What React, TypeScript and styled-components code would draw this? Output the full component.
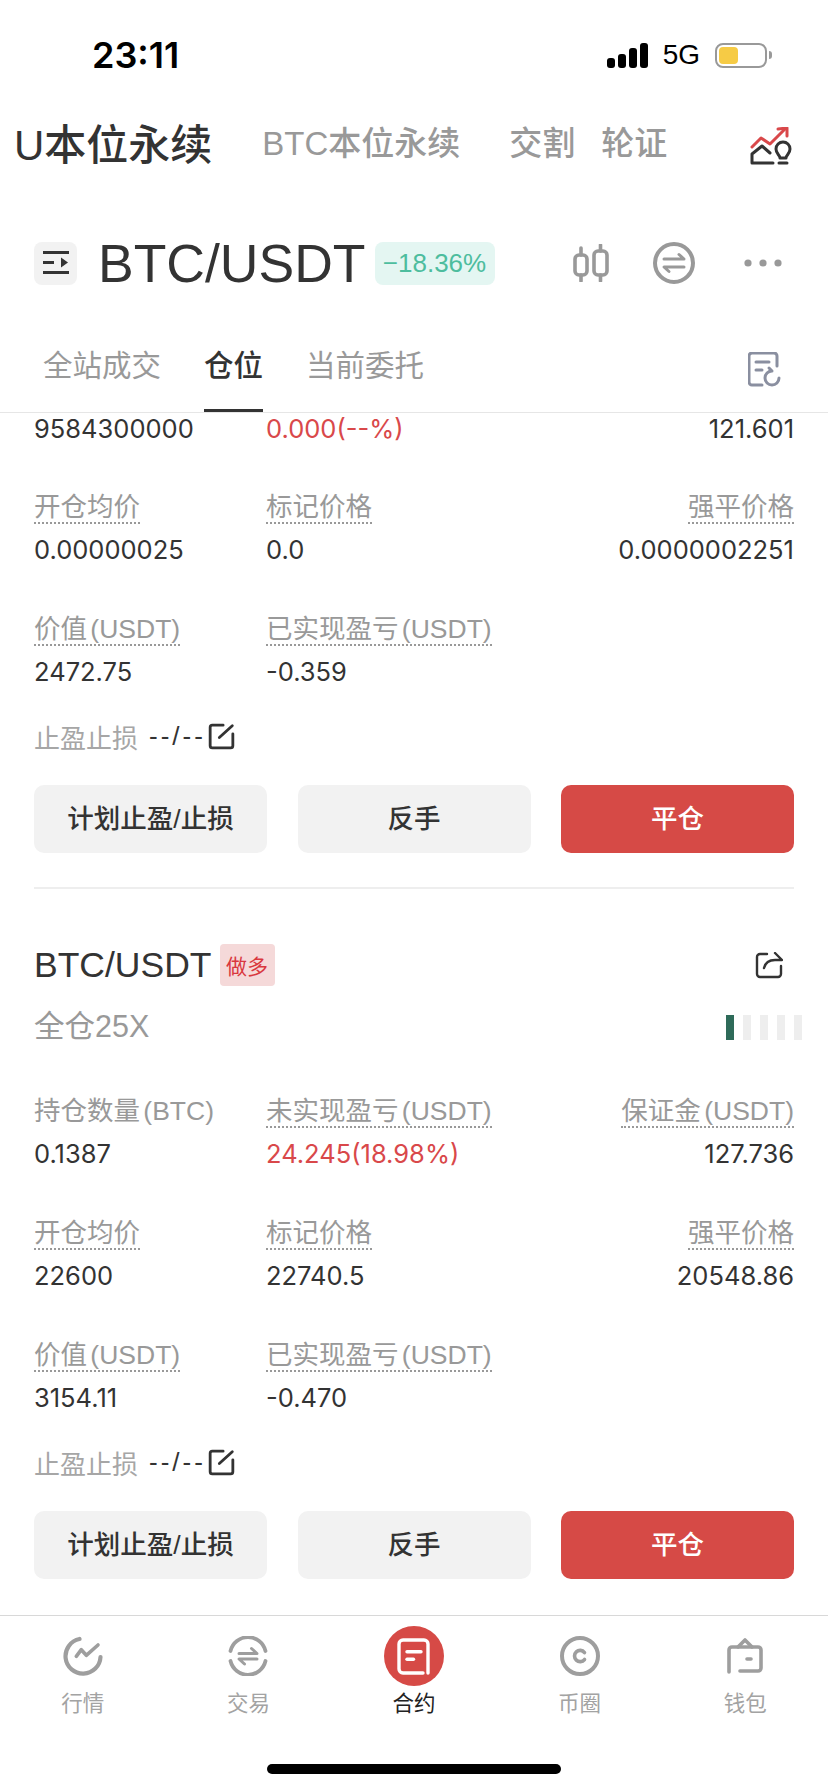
import styled, { createGlobalStyle } from 'styled-components'

const GlobalStyle = createGlobalStyle`
  html, body {
    margin: 0;
    padding: 0;
    background: #fff;
    font-family: 'Liberation Sans', 'Noto Sans CJK SC', sans-serif;
  }
`

const Page = styled.div`
  width: 828px;
  height: 1792px;
  display: flex;
  flex-direction: column;
  overflow: hidden;
  background: #fff;
  color: #333;
`

const StatusBar = styled.div`
  height: 110px;
  flex: none;
  display: flex;
  align-items: center;
  justify-content: space-between;
  padding: 0 56px 0 92px;
`

const Time = styled.span`
  font-family: Inter, sans-serif;
  font-size: 36px;
  font-weight: 600;
  color: #000;
`

const StatusRight = styled.div`
  display: flex;
  align-items: center;
`

const Signal = styled.div`
  display: flex;
  align-items: flex-end;
  gap: 3px;
  height: 25px;
  margin-right: 15px;
`

const SignalBar = styled.span<{ $h: number }>`
  width: 8px;
  height: ${(p) => p.$h}px;
  border-radius: 3px;
  background: #000;
`

const Network = styled.span`
  font-size: 28px;
  color: #000;
  margin-right: 15px;
`

const Battery = styled.div`
  width: 52px;
  height: 25px;
  box-sizing: border-box;
  border: 2.5px solid #999;
  border-radius: 8px;
  padding: 2px;
  display: flex;
`

const BatteryFill = styled.div`
  width: 19px;
  border-radius: 4px;
  background: #f6cb45;
`

const BatteryNub = styled.div`
  width: 3px;
  height: 8px;
  margin-left: 2px;
  border-radius: 0 3px 3px 0;
  background: #999;
`

const TopTabs = styled.div`
  height: 62px;
  flex: none;
  display: flex;
  align-items: center;
  padding: 0 36px 0 14px;
`

const TopTab = styled.span<{ $active?: boolean; $gap: number }>`
  font-size: ${(p) => (p.$active ? 42 : 33)}px;
  font-weight: 500;
  color: ${(p) => (p.$active ? '#333' : '#999')};
  margin-right: ${(p) => p.$gap}px;
  white-space: nowrap;
`

const InsightIcon = styled.div`
  display: flex;
  margin-top: 10px;
`

const Spacer = styled.div`
  flex: 1;
`

const PairRow = styled.div`
  height: 70px;
  flex: none;
  margin-top: 56px;
  display: flex;
  align-items: center;
  padding: 0 46px 0 34px;
`

const MenuButton = styled.div`
  width: 43px;
  height: 43px;
  border-radius: 8px;
  background: #f2f2f2;
  display: flex;
  align-items: center;
  justify-content: center;
  margin-right: 21px;
`

const PairName = styled.span`
  font-size: 53.5px;
  color: #333;
  margin-right: 9px;
`

const ChangeBadge = styled.span`
  width: 120px;
  height: 43px;
  border-radius: 8px;
  background: #e4f6f2;
  color: #4dbd9e;
  font-size: 26px;
  display: flex;
  align-items: center;
  justify-content: center;
`

const PairIcons = styled.div`
  display: flex;
  align-items: center;
  gap: 44px;
`

const MoreIcon = styled.div`
  display: flex;
  margin-left: 5px;
`

const SubTabs = styled.div`
  height: 115px;
  flex: none;
  display: flex;
  align-items: flex-end;
  padding: 0 47px 0 43px;
  border-bottom: 1px solid #e6e6e6;
  box-sizing: border-box;
`

const SubTab = styled.div<{ $active?: boolean }>`
  font-size: 29.5px;
  font-weight: ${(p) => (p.$active ? 500 : 400)};
  color: ${(p) => (p.$active ? '#333' : '#999')};
  height: 65px;
  line-height: 38px;
  box-sizing: border-box;
  margin-right: 43px;
  border-bottom: 3px solid ${(p) => (p.$active ? '#333' : 'transparent')};
`

const DocIcon = styled.div`
  align-self: flex-start;
  margin-top: 54px;
`

const Scroller = styled.div`
  flex: 1;
  min-height: 0;
  overflow: hidden;
`

const ScrollInner = styled.div`
  margin-top: -3px;
  padding: 0 34px;
  display: flex;
  flex-direction: column;
`

const Metrics = styled.div`
  display: grid;
  grid-template-columns: 232px 1fr auto;
  row-gap: 41px;
`

const Metric = styled.div<{ $right?: boolean }>`
  display: flex;
  flex-direction: column;
  align-items: ${(p) => (p.$right ? 'flex-end' : 'flex-start')};
  gap: 7px;
`

const MetricLabel = styled.span<{ $dotted?: boolean }>`
  font-size: 26.5px;
  line-height: 38px;
  height: 36px;
  color: #999;
  word-spacing: -4px;
  box-sizing: border-box;
  border-bottom: ${(p) => (p.$dotted ? '2px dotted #999' : 'none')};
  white-space: nowrap;
`

const MetricValue = styled.span<{ $red?: boolean }>`
  font-family: Inter, sans-serif;
  font-size: 25.5px;
  line-height: 38px;
  color: ${(p) => (p.$red ? '#d9484a' : '#333')};
  white-space: nowrap;
`

const StopRow = styled.div`
  margin-top: 27px;
  height: 36px;
  display: flex;
  align-items: center;
`

const StopLabel = styled.span`
  font-size: 26px;
  color: #a6a6a6;
  margin-right: 11px;
`

const StopValue = styled.span`
  font-size: 26px;
  letter-spacing: 3px;
  color: #333;
  margin-right: 2px;
`

const Actions = styled.div`
  margin-top: 31px;
  display: grid;
  grid-template-columns: repeat(3, 233px);
  justify-content: space-between;
`

const ActionButton = styled.div<{ $primary?: boolean }>`
  height: 68px;
  border-radius: 10px;
  display: flex;
  align-items: center;
  justify-content: center;
  font-size: 26.5px;
  line-height: 36px;
  padding-bottom: 1px;
  box-sizing: border-box;
  font-weight: 500;
  background: ${(p) => (p.$primary ? '#d64a46' : '#f2f2f2')};
  color: ${(p) => (p.$primary ? '#fff' : '#333')};
`

const Divider = styled.div`
  height: 2px;
  margin-top: 34px;
  background: #eee;
`

const CardHead = styled.div`
  margin-top: 55px;
  height: 42px;
  display: flex;
  align-items: center;
  justify-content: space-between;
`

const CardTitle = styled.div`
  display: flex;
  align-items: center;
  gap: 8px;
`

const CardPair = styled.span`
  font-size: 35.5px;
  line-height: 46px;
  color: #333;
`

const SideBadge = styled.span`
  width: 55px;
  height: 42px;
  border-radius: 4px;
  background: #f5d9d9;
  color: #d9383f;
  font-size: 21px;
  display: flex;
  align-items: center;
  justify-content: center;
`

const ShareIcon = styled.div`
  display: flex;
  margin-right: 11px;
`

const CardSub = styled.div`
  margin-top: 23px;
  margin-bottom: 47px;
  height: 36px;
  display: flex;
  align-items: center;
  justify-content: space-between;
`

const Leverage = styled.span`
  font-size: 30.5px;
  line-height: 36px;
  padding-bottom: 2px;
  color: #999;
`

const RiskBars = styled.div`
  display: flex;
  gap: 9px;
  margin-right: -8px;
`

const RiskBar = styled.span<{ $on?: boolean }>`
  width: 8px;
  height: 25px;
  background: ${(p) => (p.$on ? '#2e6b59' : '#eee')};
`

const BottomNav = styled.div`
  flex: none;
  height: 177px;
  box-sizing: border-box;
  border-top: 1px solid #d8d8d8;
  padding-top: 10px;
  display: flex;
  flex-direction: column;
  align-items: center;
`

const NavItems = styled.div`
  width: 100%;
  display: grid;
  grid-template-columns: repeat(5, 1fr);
`

const NavItem = styled.div`
  display: flex;
  flex-direction: column;
  align-items: center;
  gap: 3px;
`

const NavIconSlot = styled.div`
  height: 60px;
  display: flex;
  align-items: center;
  justify-content: center;
`

const NavLabel = styled.span<{ $active?: boolean }>`
  font-size: 21.5px;
  line-height: 30px;
  color: ${(p) => (p.$active ? '#222' : '#a3a3a3')};
`

const HomeIndicator = styled.div`
  width: 294px;
  height: 10px;
  margin-top: 45px;
  border-radius: 5px;
  background: #000;
`

const GRAY = '#9e9e9e'

function TrendIcon() {
  return (
    <svg width="40" height="40" viewBox="0 0 40 40" fill="none" stroke={GRAY} strokeWidth="4.2" strokeLinecap="round" strokeLinejoin="round">
      <path d="M16.5 3 A17.5 17.5 0 1 0 37.5 21" />
      <path d="M13.3 20.3 L18.3 13.7 L23.3 19.3 L35 9" strokeWidth="3.6" />
    </svg>
  )
}

function TradeIcon() {
  return (
    <svg width="40" height="40" viewBox="0 0 40 40" fill="none" stroke={GRAY} strokeWidth="3.8" strokeLinecap="round" strokeLinejoin="round">
      <path d="M2.5 15 A18 18 0 0 1 37.5 15" />
      <path d="M2.5 25 A18 18 0 0 0 37.5 25" />
      <path d="M11 17.5 H29 L23.5 12.5" strokeWidth="3" />
      <path d="M29 23 H11 L16.5 28" strokeWidth="3" />
    </svg>
  )
}

function ContractIcon() {
  return (
    <svg width="60" height="60" viewBox="0 0 60 60" fill="none">
      <circle cx="30" cy="30" r="30" fill="#d64a46" />
      <g stroke="#fff" strokeWidth="3.4" strokeLinecap="round" strokeLinejoin="round">
        <path d="M39 47 H19 a4 4 0 0 1 -4 -4 V18 a4 4 0 0 1 4 -4 H40 a4 4 0 0 1 4 4 V47" />
        <path d="M23 25.7 H37" />
        <path d="M23 33.3 H29.5" />
      </g>
    </svg>
  )
}

function CoinIcon() {
  return (
    <svg width="40" height="40" viewBox="0 0 40 40" fill="none" stroke={GRAY} strokeWidth="4" strokeLinecap="round">
      <circle cx="20" cy="20" r="18" />
      <path d="M24.5 16.5 A5.6 5.6 0 1 0 24.5 23.5" strokeWidth="3.6" />
    </svg>
  )
}

function WalletIcon() {
  return (
    <svg width="36" height="36" viewBox="0 0 36 36" fill="none" stroke={GRAY} strokeWidth="3.6" strokeLinecap="round" strokeLinejoin="round">
      <path d="M2 34 V12 a3 3 0 0 1 3 -3 H11 L18 2 L25 9 H31 a3 3 0 0 1 3 3 V30 a3 3 0 0 1 -3 3 H13" />
      <path d="M11 9 H25" />
      <path d="M20 21 H24" />
    </svg>
  )
}

function EditIcon() {
  return (
    <svg width="27" height="27" viewBox="0 0 25 25" fill="none" stroke="#333" strokeWidth="2.6" strokeLinecap="round">
      <path d="M14 2 H4 a2 2 0 0 0 -2 2 V21 a2 2 0 0 0 2 2 H21 a2 2 0 0 0 2 -2 V10" />
      <path d="M10.5 13.5 L22.5 2.5" />
    </svg>
  )
}

function StopLoss() {
  return (
    <StopRow>
      <StopLabel>止盈止损</StopLabel>
      <StopValue>--/--</StopValue>
      <EditIcon />
    </StopRow>
  )
}

function ActionRow() {
  return (
    <Actions>
      <ActionButton>计划止盈/止损</ActionButton>
      <ActionButton>反手</ActionButton>
      <ActionButton $primary>平仓</ActionButton>
    </Actions>
  )
}

const navItems = [
  { label: '行情', icon: <TrendIcon /> },
  { label: '交易', icon: <TradeIcon /> },
  { label: '合约', icon: <ContractIcon />, active: true },
  { label: '币圈', icon: <CoinIcon /> },
  { label: '钱包', icon: <WalletIcon /> },
]

const firstCard = [
  { label: '开仓均价', value: '0.00000025' },
  { label: '标记价格', value: '0.0' },
  { label: '强平价格', value: '0.0000002251', right: true },
  { label: '价值 (USDT)', value: '2472.75' },
  { label: '已实现盈亏 (USDT)', value: '-0.359' },
]

const secondCard = [
  { label: '持仓数量 (BTC)', value: '0.1387', plain: true },
  { label: '未实现盈亏 (USDT)', value: '24.245(18.98%)', red: true },
  { label: '保证金 (USDT)', value: '127.736', right: true },
  { label: '开仓均价', value: '22600' },
  { label: '标记价格', value: '22740.5' },
  { label: '强平价格', value: '20548.86', right: true },
  { label: '价值 (USDT)', value: '3154.11' },
  { label: '已实现盈亏 (USDT)', value: '-0.470' },
]

type MetricData = { label: string; value: string; right?: boolean; red?: boolean; plain?: boolean }

function MetricGrid({ items }: { items: MetricData[] }) {
  return (
    <Metrics>
      {items.map((m) => (
        <Metric key={m.label} $right={m.right}>
          <MetricLabel $dotted={!m.plain}>{m.label}</MetricLabel>
          <MetricValue $red={m.red}>{m.value}</MetricValue>
        </Metric>
      ))}
    </Metrics>
  )
}

const ClippedRow = styled(Metrics)`
  margin-bottom: 40px;
`

export default function App() {
  return (
    <Page>
      <GlobalStyle />
      <StatusBar>
        <Time>23:11</Time>
        <StatusRight>
          <Signal>
            <SignalBar $h={10} />
            <SignalBar $h={14} />
            <SignalBar $h={20} />
            <SignalBar $h={25} />
          </Signal>
          <Network>5G</Network>
          <Battery>
            <BatteryFill />
          </Battery>
          <BatteryNub />
        </StatusRight>
      </StatusBar>

      <TopTabs>
        <TopTab $active $gap={50}>U本位永续</TopTab>
        <TopTab $gap={49}>BTC本位永续</TopTab>
        <TopTab $gap={26}>交割</TopTab>
        <TopTab $gap={0}>轮证</TopTab>
        <Spacer />
        <InsightIcon>
          <svg width="42" height="38" viewBox="0 0 42 38" fill="none" strokeWidth="3" strokeLinecap="round" strokeLinejoin="round">
            <path d="M2 20 L11 11 L20 17 L35 2" stroke="#d9484a" />
            <path d="M28 2 L37 1 L37 9" stroke="#d9484a" />
            <path d="M2 36 V27 L12 19 L20 26 M2 36 H23" stroke="#333" />
            <path d="M30 31 C30 28 26 27 26 22 A7 7 0 0 1 40 22 C40 27 36 28 36 31 Z" stroke="#333" />
            <path d="M29 36 H37" stroke="#333" />
          </svg>
        </InsightIcon>
      </TopTabs>

      <PairRow>
        <MenuButton>
          <svg width="26" height="24" viewBox="0 0 26 24" fill="#333">
            <rect x="0" y="0" width="26" height="3" />
            <rect x="0" y="10" width="11" height="3" />
            <path d="M18 6.5 L25 11.5 L18 16.5 Z" />
            <rect x="0" y="20" width="26" height="3" />
          </svg>
        </MenuButton>
        <PairName>BTC/USDT</PairName>
        <ChangeBadge>−18.36%</ChangeBadge>
        <Spacer />
        <PairIcons>
          <svg width="36" height="38" viewBox="0 0 36 38" fill="none" stroke="#999" strokeWidth="3.6" strokeLinecap="round">
            <rect x="2" y="11" width="12" height="20" rx="4" />
            <path d="M8 4 V11 M8 31 V37" />
            <rect x="21" y="7" width="13" height="24" rx="4" />
            <path d="M27.5 1 V7 M27.5 31 V37" />
          </svg>
          <svg width="42" height="42" viewBox="0 0 42 42" fill="none" stroke="#999" strokeWidth="4" strokeLinecap="round" strokeLinejoin="round">
            <circle cx="21" cy="21" r="19" />
            <path d="M11 17 H31 L26 12.5" strokeWidth="3" />
            <path d="M31 25 H11 L16 29.5" strokeWidth="3" />
          </svg>
          <MoreIcon>
            <svg width="38" height="8" viewBox="0 0 38 8" fill="#999">
              <circle cx="4" cy="4" r="3.6" />
              <circle cx="19" cy="4" r="3.6" />
              <circle cx="34" cy="4" r="3.6" />
            </svg>
          </MoreIcon>
        </PairIcons>
      </PairRow>

      <SubTabs>
        <SubTab>全站成交</SubTab>
        <SubTab $active>仓位</SubTab>
        <SubTab>当前委托</SubTab>
        <Spacer />
        <DocIcon>
          <svg width="33" height="35" viewBox="0 0 33 35" fill="none" stroke="#8a8fa0" strokeWidth="3" strokeLinecap="round" strokeLinejoin="round">
            <path d="M14 33 H4 a3 3 0 0 1 -3 -3 V4 a3 3 0 0 1 3 -3 H26 a3 3 0 0 1 3 3 V14" />
            <path d="M8 10 H21 M8 18 H14" />
            <path d="M31 26 A7 7 0 1 1 24 19 L21 16" />
          </svg>
        </DocIcon>
      </SubTabs>

      <Scroller>
        <ScrollInner>
          <ClippedRow>
            <MetricValue>9584300000</MetricValue>
            <MetricValue $red>0.000(--%)</MetricValue>
            <MetricValue>121.601</MetricValue>
          </ClippedRow>
          <MetricGrid items={firstCard} />
          <StopLoss />
          <ActionRow />
          <Divider />

          <CardHead>
            <CardTitle>
              <CardPair>BTC/USDT</CardPair>
              <SideBadge>做多</SideBadge>
            </CardTitle>
            <ShareIcon>
              <svg width="28" height="27" viewBox="0 0 28 27" fill="none" stroke="#333" strokeWidth="2.4" strokeLinecap="round" strokeLinejoin="round">
                <path d="M12 2 H5 a3 3 0 0 0 -3 3 V22 a3 3 0 0 0 3 3 H23 a3 3 0 0 0 3 -3 V14" />
                <path d="M9 16 Q11 8 20 8 H27 L20 1" />
              </svg>
            </ShareIcon>
          </CardHead>
          <CardSub>
            <Leverage>全仓25X</Leverage>
            <RiskBars>
              <RiskBar $on />
              <RiskBar />
              <RiskBar />
              <RiskBar />
              <RiskBar />
            </RiskBars>
          </CardSub>
          <MetricGrid items={secondCard} />
          <StopLoss />
          <ActionRow />
        </ScrollInner>
      </Scroller>

      <BottomNav>
        <NavItems>
          {navItems.map((item) => (
            <NavItem key={item.label}>
              <NavIconSlot>{item.icon}</NavIconSlot>
              <NavLabel $active={item.active}>{item.label}</NavLabel>
            </NavItem>
          ))}
        </NavItems>
        <HomeIndicator />
      </BottomNav>
    </Page>
  )
}
